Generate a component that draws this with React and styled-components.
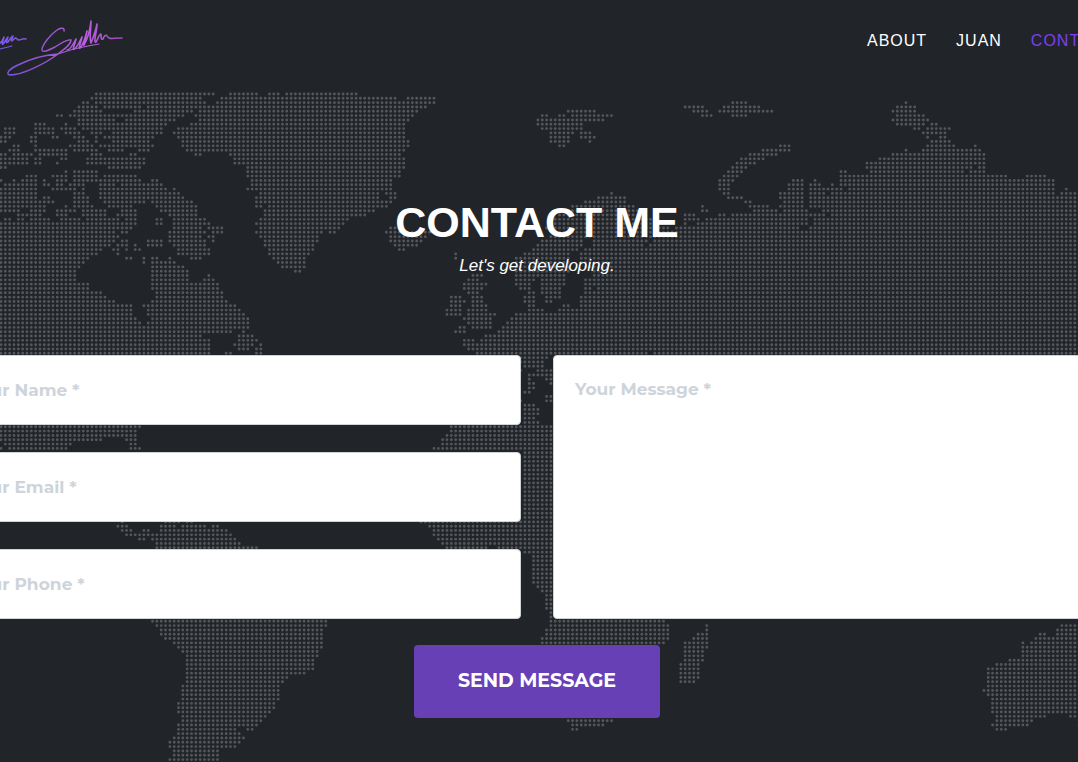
import React from "react";
import styled, { createGlobalStyle } from "styled-components";

const GlobalStyle = createGlobalStyle`
  *, *::before, *::after { box-sizing: border-box; }
  html { overflow: hidden; }
  body {
    margin: 0;
    background: #212529;
    color: #fff;
    font-family: "Liberation Sans", Arial, sans-serif;
  }
`;

const PITCH_X = 4.33;
const PITCH_Y = 4.322;
const MAP_X = 1;
const MAP_Y = 94;

/* World map, one entry per block of dot rows: first row, then the column runs of each row. */
const MAP = {
  0: `22-49 53-59 62-64 66-82
21-46 51-91 94-100
19-20 22-47 50-100 169-172 209
18-22 24-32 34-98 158-162 167-175 207-211
17-23 31-44 46-96 131-137 160-163 166-178 206-211
13-14 16-42 45-95 125-126 129-130 132-141 162-164 169-172 207-213
18-26 29-40 46-94 124-139 206-214
8-10 15 18-38 44-93 124-134 207-213 215-216
1-3 8-12 14-17 19-37 41-93 125-134 211-212 214-219
1-3 8-12 15-18 21-23 26-37 40-93 127-132 134-136 213-218
0-2 7-8 12-13 17-19 22 24-35 41-93 127-131 134-137 214 217-218
0-1 7-8 18-20 22 26-34 42-94 127-131 136 215-219
3-4 8 16-21 23-35 42-94 129-130 180-182 214-220 225
2-4 8-15 17-22 25-28 32-34 43-93 176-182 209 213-226
0-1 3-7 9-15 21-23 30-31 45-46 53-92 173-179 206-227
0-6 8-9 14-15 20-33 54-93 171-176 203-227
0-6 8-9 13 20-33 54-93 170-174 200-227
0-1 25-32 57-93 169-172 200-224 226-227
15 17-22 57-92 168-171 194-195 201-222 224-227
6-8 12-15 17-22 24-31 57-92 167-170 194-232 237-241
0 3 5-8 10 13-15 17-22 23-32 35-36 58-90 166-169 183-185 188 194-243
1-8 10-11 13-14 16-19 23-26 28-37 58-90 166-168 182-185 187-189 192 194-243
0-8 12-17 19 23-38 40 57-90 166-168 182-185 187-194 196-243 246
0-8 17-19 23-41 60-87 89-91 141 167-168 180-185 187-190 192-243 245-250
0-8 10-11 17-20 23-42 59-87 90-91 138-144 168-171 180-185 187-250
0-12 17-20 24-33 35-44 59-90 135-144 172-173 181-185 187-250
0-10 15 17-21 25-30 36-45 59-60 62-89 132-146 162 173-177 180-185 187-250
0-4 7-10 13-17 19-24 28-31 37-45 61-86 131-148 162-163 174-179 181-186 190-250
4-9 13-15 19-24 27-31 39-45 61-84 129-148 158-160 166-167 169-186 187-190 192-250
1-2 4-5 7-11 14-18 20-27 29-31 36-37 40-47 60-80 128-150 158-161 163-186 188-250
0-31 36-37 40-48 59-79 127-152 158 161-186 188-250
0-30 40-46 48-51 60-78 90-91 126-154 156-184 187-250
0-26 28-29 39-47 49-51 59-74 76-77 89-99 128-250
0-27 39-46 48-49 60-73 90-98 127-250
0-26 28-29 34-37 39-47 49 61-73 90-97 125-134 137-149 151-250
0-25 27-29 31 34-37 40-47 61-72 91-96 124-134 137-148 150-250
0-23 26-27 29 31-32 41-48 62-72 92-93 123-133 135-250
0-22 27 41-48 62-71 105 121-131 134-250
0-20 29-30 33 35-36 39 44-46 63-70 105 119-131 134-250
0-19 33 35-40 64-70 119-131 134-250
0-18 35-42 65-70 119-131 135-250
0-17 35-43 68-69 119-131 137-250
0-17 35-43 48 109-111 119-130 137-250
0-17 35-43 47-49 108-110 119-123 125-130 135-250
0-20 35-50 107-112 119-122 125-130 135-250
0-20 35-50 107-111 120-122 125-129 135-136 138-250
0-23 36-51 108-110 122-123 125-129 135-250
0-24 36-51 104-106 109-111 121-123 126-129 134-250
0-26 35-52 104-107 109-111 121-123 126-127 134-250
0-30 33-54 104-106 109-112 122-123 130-131 134-250
0-30 34-55 103-106 108-112 122-125 129-250
0-30 34-56 103-106 108-114 119-250
0-31 35-57 107-113 118-250
0-32 34-57 108-113 117-250
0-57 106-107 109-113 116-250
0-53 56 105-107 115-250
0-46 55-58 112-250
0-48 55-59 107-109 111-250
0-48 54-58 60 107-250
0-48 55-57 59-60 108-250
0-48 52-53 59-60 110-149 151-250
120-126
120-125
121-125
120 124-127
122-127
122 126-127
122-123 127
122-123
121-122
126-127
120 126-127
121-123
121-124
121-124
121-123
121-124
0-32 104-127
0-31 104-127
0-31 103-127
0-23 29-31 102-127
1-16 30-31 102-127
0 2-15 30-32 100-127`,
  83: Array(16).fill("121-127").join("\n"),
  99: `28 38-41 43-44 97-127
27-29 37-40 42-47 49-50 99-127
28-30 33-34 37-52 100-127
29-31 32-34 35-53 100-127
32-33 35-54 101-127
36-55 102-127
36-59 103-112 115-127
121-127
123-127
123-127
123-127
123-127
123-127
123-127
123-127
124-127
125-127
126-127
126-127
126-127
126-127
127
127
35-75 127-153
36-75 127-154 163 245-250
37-74 126-154 163 244-250
37-74 126-154 161-163 240-241 244-250
38-74 125-154 160-163 239-250
40-74 125-153 158-163 236 238-250
41-74 158-163 236-250
42-73 158-162 236-250
43-73 158-162 236-250
43-72 158-162 233-250
43-72 157-161 230-250
43-72 157-161 228-250
43-70 157-161 228-250
43-66 157-161 228-250
43-65 157-160 228-250
42-64 228-250
42-64 227-250
42-64 228-250
42-64 229-250
41-63 229-250
41-63 229-250
41-62 229-250
42-61 230-241 247-250
42-60 131-141 230-238 249-250
41-59 132-139 229-237 249-250
41-54 57-58 132-133 230-232
41-55
40-56
39-55
39-54
40-50
40-50
39-50`,
};

function rowPath(runs, row) {
  const y = MAP_Y + row * PITCH_Y;
  let d = "";
  runs.split(" ").forEach((run) => {
    const [from, to = from] = run.split("-").map(Number);
    for (let c = from; c <= to; c += 1) {
      d += `M${(MAP_X + c * PITCH_X).toFixed(2)} ${y.toFixed(2)}h0`;
    }
  });
  return d;
}

const MAP_PATH = Object.entries(MAP)
  .map(([first, block]) =>
    block.split("\n").map((runs, i) => rowPath(runs, Number(first) + i)).join("")
  )
  .join("");

const Page = styled.div`
  display: grid;
  grid-template: minmax(100vh, auto) / minmax(0, 1fr);
  overflow: hidden;
`;

const MapArt = styled.svg`
  grid-area: 1 / 1;
  width: 100%;
  height: 100%;
  min-height: 0;
`;

const Content = styled.div`
  grid-area: 1 / 1;
  min-width: 0;
  z-index: 1;
`;

const Header = styled.header`
  display: flex;
  align-items: center;
  justify-content: space-between;
  height: 82px;
  margin-right: -36px;
`;

const Brand = styled.a`
  display: block;
  height: 82px;
`;

const Nav = styled.nav`
  display: flex;
  gap: 29px;
`;

const NavLink = styled.a`
  color: ${(p) => (p.$active ? "#7e3ff2" : "#fff")};
  font-size: 16px;
  line-height: 24px;
  letter-spacing: 1px;
  text-transform: uppercase;
  text-decoration: none;
`;

const Contact = styled.main`
  display: flex;
  flex-direction: column;
  padding: 114px 4px 44px 0;
`;

const Title = styled.h1`
  margin: 0;
  font-size: 43px;
  line-height: 52px;
  font-weight: 700;
  text-align: center;
  text-transform: uppercase;
`;

const Subtitle = styled.p`
  margin: 5px 0 76px;
  font-size: 17px;
  line-height: 26px;
  font-style: italic;
  text-align: center;
`;

const Form = styled.form`
  display: grid;
  grid-template-columns: 1fr 1fr;
  gap: 26px 32px;
  margin: 0 -53px;
`;

const Column = styled.div`
  display: flex;
  flex-direction: column;
  gap: 27px;
`;

const HiddenText = styled.span`
  position: absolute;
  width: 1px;
  height: 1px;
  overflow: hidden;
  clip-path: inset(50%);
`;

const Field = styled.label`
  display: flex;
  flex: ${(p) => (p.$grow ? 1 : "none")};
`;

const Input = styled.input`
  width: 100%;
  height: ${(p) => (p.as === "textarea" ? "auto" : "70px")};
  padding: 20px 21px;
  border: 1px solid #ced4da;
  border-radius: 4px;
  background: #fff;
  color: #212529;
  font: 700 17px/26px Montserrat, Inter, sans-serif;
  resize: none;
  outline: none;

  &::placeholder {
    color: #ced4da;
    opacity: 1;
  }
`;

const SendButton = styled.button`
  grid-column: 1 / -1;
  justify-self: center;
  padding: 22px 44px 24px;
  border: 0;
  border-radius: 4px;
  background: #6740b6;
  color: #fff;
  font: 700 19px/27px Montserrat, Inter, sans-serif;
  text-transform: uppercase;
`;

function Signature() {
  return (
    <svg width="124" height="80" viewBox="0 0 124 80" fill="none" aria-hidden="true">
      <defs>
        <linearGradient id="ink" gradientUnits="userSpaceOnUse" x1="0" y1="0" x2="122" y2="0">
          <stop offset="0" stopColor="#7c5cf0" />
          <stop offset="0.25" stopColor="#8a50cf" />
          <stop offset="0.7" stopColor="#b85fe0" />
          <stop offset="1" stopColor="#9b4bb8" />
        </linearGradient>
      </defs>
      <g stroke="url(#ink)" strokeLinecap="round" strokeLinejoin="round">
        <path strokeWidth="1.5" d="M0 43C2 42 3 39 4 37C3 41 1 45 3 44C5 42 6 39 8 37C7 40 5 44 8 42C10 39 11 37 13 36C12 39 10 43 13 40C15 38 16 37 17 39C19 42 21 38 26 39" />
        <path strokeWidth="1" d="M0 49L12 46" />
        <path strokeWidth="1.4" d="M64 31C65 28 61 27 57 30C50 35 43 44 42 49C41 54 49 50 55 47C61 43 68 39 71 40C71 45 64 49 58 54C46 63 23 75 10 75C5 74 9 69 18 65C30 59 44 55 58 54" />
        <path strokeWidth="1.1" d="M58 54C72 49 86 46 99 44" />
        <path strokeWidth="1.6" d="M67 50C70 50 74 43 76 39C75 44 72 50 74 49C77 48 80 41 82 37C81 42 78 49 80 48C83 45 86 36 87 31C86 37 83 46 84 45C87 40 90 30 91 21C91 30 89 38 91 43C93 38 96 29 97 24C97 31 93 43 96 42C98 39 99 34 101 34C101 37 101 40 103 39C104 36 106 34 107 36C109 40 113 38 122 38" />
      </g>
    </svg>
  );
}

const FIELDS = [
  { label: "Your Name *", type: "text" },
  { label: "Your Email *", type: "email" },
  { label: "Your Phone *", type: "tel" },
];

export default function App() {
  return (
    <>
      <GlobalStyle />
      <Page>
        <MapArt viewBox="0 0 1078 762" preserveAspectRatio="xMidYMin slice" aria-hidden="true">
          <path d={MAP_PATH} fill="none" stroke="#53565a" strokeWidth="2.9" strokeLinecap="round" />
        </MapArt>
        <Content>
          <Header>
            <Brand href="#home" aria-label="Home">
              <Signature />
            </Brand>
            <Nav>
              <NavLink href="#about">About</NavLink>
              <NavLink href="#juan">Juan</NavLink>
              <NavLink href="#contact" $active>Contact</NavLink>
            </Nav>
          </Header>
          <Contact id="contact">
            <Title>Contact Me</Title>
            <Subtitle>Let's get developing.</Subtitle>
            <Form onSubmit={(e) => e.preventDefault()}>
              <Column>
                {FIELDS.map((f) => (
                  <Field key={f.label}>
                    <HiddenText>{f.label}</HiddenText>
                    <Input type={f.type} placeholder={f.label} />
                  </Field>
                ))}
              </Column>
              <Column>
                <Field $grow>
                  <HiddenText>Your Message *</HiddenText>
                  <Input as="textarea" placeholder="Your Message *" />
                </Field>
              </Column>
              <SendButton type="submit">Send Message</SendButton>
            </Form>
          </Contact>
        </Content>
      </Page>
    </>
  );
}
